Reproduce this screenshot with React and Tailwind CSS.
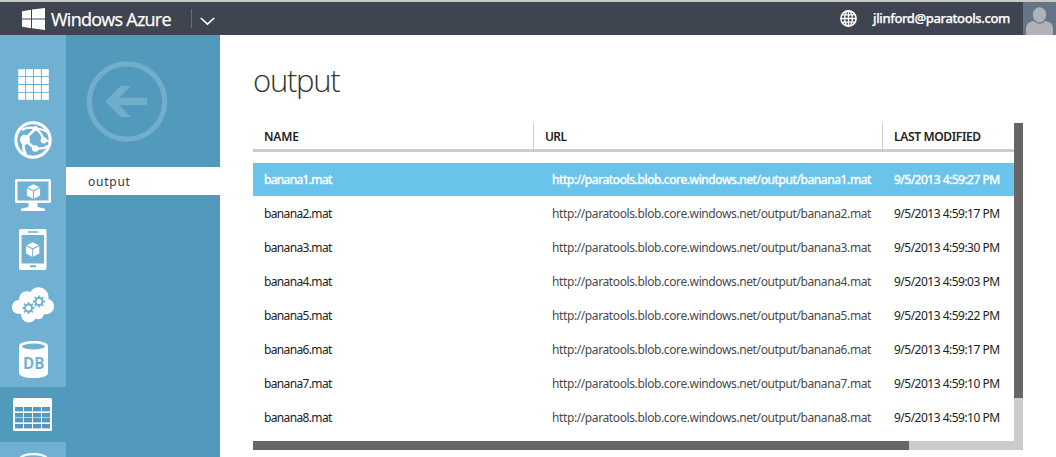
import React from "react";

const files = [
  ["banana1.mat", "9/5/2013 4:59:27 PM"],
  ["banana2.mat", "9/5/2013 4:59:17 PM"],
  ["banana3.mat", "9/5/2013 4:59:30 PM"],
  ["banana4.mat", "9/5/2013 4:59:03 PM"],
  ["banana5.mat", "9/5/2013 4:59:22 PM"],
  ["banana6.mat", "9/5/2013 4:59:17 PM"],
  ["banana7.mat", "9/5/2013 4:59:10 PM"],
  ["banana8.mat", "9/5/2013 4:59:10 PM"],
];

function WindowsLogo() {
  return (
    <svg width="23" height="22" viewBox="0 0 23 22" fill="#fff">
      <path d="M0 3.2 9 1.8V10.6H0zM10 1.6 23 0V10.6H10zM0 11.5H9V20.2L0 18.8zM10 11.5H23V22L10 20.3z" />
    </svg>
  );
}

function GlobeIcon() {
  return (
    <svg width="17" height="17" viewBox="0 0 17 17" fill="none" stroke="#fff" strokeWidth="1.3">
      <circle cx="8.5" cy="8.5" r="7.6" strokeWidth="1.6" />
      <ellipse cx="8.5" cy="8.5" rx="3.8" ry="7.6" />
      <path d="M8.5 1v15M1 8.5h15M2.2 4.8h12.6M2.2 12.2h12.6" />
    </svg>
  );
}

function AllItemsIcon() {
  const steps = [0, 1, 2, 3];
  return (
    <svg width="31" height="31" viewBox="0 0 31 31" fill="#fff">
      {steps.map((r) =>
        steps.map((c) => <rect key={`${r}-${c}`} x={c * 7.9 + 0.2} y={r * 7.9 + 0.2} width="6.9" height="6.9" />)
      )}
    </svg>
  );
}

function WebSitesIcon() {
  return (
    <svg width="38" height="38" viewBox="0 0 38 38" fill="none" stroke="#fff">
      <circle cx="19" cy="19" r="17.2" strokeWidth="3" />
      <path d="M11 18 21.500 7.500M12 20 21 27.500M10 20Q8 27 12 34" strokeWidth="2.800" />
      <path d="M21.500 7.500Q14 5 8 9M21.500 7.500Q30 8 34 12M21.500 7.500Q28 12 29.500 19M21.500 27.500Q29 28.500 34 25M29.500 19 35 20" strokeWidth="2.200" />
      <g fill="#fff" stroke="none">
        <circle cx="11" cy="18.800" r="5" />
        <circle cx="21.500" cy="7.500" r="2.500" />
        <circle cx="21.200" cy="27.500" r="3.300" />
        <circle cx="29.700" cy="19.300" r="3.100" />
      </g>
    </svg>
  );
}

function Cube() {
  return (
    <>
      <path d="M0-7.300 6-4.300 0-1.300-6-4.300z" />
      <path d="M-6.600-3.300-.5-.3V7.200L-6.600 4zM6.600-3.300.5-.3V7.200L6.600 4z" />
    </>
  );
}

function VirtualMachineIcon() {
  return (
    <svg width="36" height="34" viewBox="0 0 36 34" fill="#fff">
      <path fillRule="evenodd" d="M1.500 1h33a1.500 1.500 0 0 1 1.500 1.500v21a1.500 1.500 0 0 1-1.500 1.500h-33A1.500 1.500 0 0 1 0 23.500v-21A1.500 1.500 0 0 1 1.500 1zM2.500 3.500v19h31v-19zM13.500 25h9v4l7.500 1.700V33H6v-2.300l7.500-1.700z" />
      <g transform="translate(18.500 13.500)"><Cube /></g>
    </svg>
  );
}

function MobileIcon() {
  return (
    <svg width="28" height="41" viewBox="0 0 28 41">
      <rect width="27.500" height="41" rx="2" fill="#fff" />
      <path d="M2.500 6H25v28.500H2.500zM9 2.300h10v1.400H9zM11 36.300h6v2h-6z" fill="#70b1d3" />
      <g transform="translate(13.700 20.500)" fill="#fff"><Cube /></g>
    </svg>
  );
}

function Gear({ x, y }) {
  return (
    <g transform={`translate(${x} ${y})`} stroke="#70b1d3" fill="none">
      <circle r="3.500" strokeWidth="2" />
      <path d="M0-4V-6M0 4V6M-4 0H-6M4 0H6M-2.900-2.900-4.300-4.300M2.900 2.900 4.300 4.300M-2.900 2.900-4.300 4.300M2.900-2.900 4.300-4.300" strokeWidth="1.800" />
    </g>
  );
}

function CloudIcon() {
  return (
    <svg width="42" height="36" viewBox="0 0 42 36">
      <path fill="#fff" d="M7 13C3 13 0 16 0 20.500s4 7 9 6.500c0 4 3 8.500 7.500 8.500 3.500 0 5.500-1.500 7-4 2 1.500 7 1.500 8.500-4.500 6 1 10-3 10-7.500 0-4-2-6.500-5.500-7.500C37 6 34 1.500 28 0.500 24-.2 20.500 1.500 18.500 5 13 2.500 7 6 7 13z" />
      <Gear x={16.500} y={21} />
      <Gear x={27} y={14.500} />
    </svg>
  );
}

function DatabaseIcon() {
  return (
    <svg width="29" height="37" viewBox="0 0 29 37">
      <path fill="#fff" d="M0 5C0 2 6 0 14.500 0S29 2 29 5v27c0 3-6 5-14.500 5S0 35 0 32z" />
      <ellipse cx="14.500" cy="5.500" rx="11.500" ry="3" fill="#70b1d3" />
      <text x="4" y="27.500" fontFamily="Open Sans, sans-serif" fontWeight="700" fontSize="15.500" fill="#70b1d3" textLength="21.500" lengthAdjust="spacingAndGlyphs">DB</text>
    </svg>
  );
}

function TableIcon() {
  const rows = [9, 15, 20, 26];
  const cols = [2, 11, 20, 29];
  return (
    <svg width="39" height="33" viewBox="0 0 39 33">
      <rect width="39" height="33" rx="1.500" fill="#fff" />
      {rows.map((y) => cols.map((x) => <rect key={`${x}-${y}`} x={x} y={y} width="8" height="4.400" fill="#519abb" />))}
    </svg>
  );
}

function CylinderTopIcon() {
  return (
    <svg width="29" height="34" viewBox="0 0 29 34" fill="none" stroke="#fff" strokeWidth="2.200">
      <path d="M1.100 6C1.100 3 7 1.100 14.500 1.100S27.900 3 27.900 6v24H1.100z" />
    </svg>
  );
}

function BackIcon() {
  return (
    <svg width="82" height="82" viewBox="0 0 82 82" fill="none" stroke="#70aecb">
      <circle cx="41" cy="41.500" r="37.700" strokeWidth="5.200" />
      <path fill="#70aecb" stroke="none" d="M19.500 41.500 34.500 26H45L33 37.800H61V45H33L45 57H34.500z" />
    </svg>
  );
}

const navItems = [AllItemsIcon, WebSitesIcon, VirtualMachineIcon, MobileIcon, CloudIcon, DatabaseIcon];

export default function App() {
  return (
    <div className="flex h-[457px] w-[1056px] flex-col overflow-hidden bg-white font-['Noto_Sans','Open_Sans',sans-serif] text-[#222]">
      <header className="flex h-[35px] shrink-0 items-stretch border-t-2 border-[#c9c9c7] bg-[#3e4450] text-white">
        <div className="flex items-center pl-[22px]">
          <WindowsLogo />
          <span className="ml-[6px] w-[121px] whitespace-nowrap font-['Open_Sans'] text-[18px] leading-6 tracking-[-0.75px] [-webkit-text-stroke:0.25px_white]">Windows Azure</span>
          <span className="ml-[19px] h-[19px] w-px bg-[#686d77]" />
          <svg className="ml-[8px] mt-[5px]" width="15" height="9" viewBox="0 0 15 9" fill="none" stroke="#fff" strokeWidth="1.600"><path d="M.8 1 7.500 7.200 14.200 1" /></svg>
        </div>
        <div className="ml-auto flex items-center">
          <GlobeIcon />
          <span className="ml-[16px] w-[150px] whitespace-nowrap pt-px text-[13px] font-medium tracking-[-0.38px] [-webkit-text-stroke:0.25px_white]">jlinford@paratools.com</span>
          <svg className="self-end" width="33" height="33" viewBox="0 0 33 33">
            <rect width="33" height="33" fill="#667585" />
            <path d="M3 33V27c0-5 3-7.500 8-8h11c5 .5 8 3 8 8v6z" fill="#adb3b9" />
            <ellipse cx="16.500" cy="12.800" rx="7.300" ry="8.300" fill="#adb3b9" stroke="#667585" strokeWidth="1.300" />
          </svg>
        </div>
      </header>

      <div className="flex min-h-0 flex-1">
        <nav className="flex w-[66px] shrink-0 flex-col overflow-hidden bg-[#70b1d3] pt-[22px]">
          {navItems.map((Icon, i) => (
            <div key={i} className="flex h-[55px] shrink-0 items-center justify-center">
              <Icon />
            </div>
          ))}
          <div className="flex h-[55px] shrink-0 items-center bg-[#519abb] pl-[13px]">
            <TableIcon />
          </div>
          <div className="flex h-[55px] shrink-0 items-center justify-center">
            <CylinderTopIcon />
          </div>
        </nav>

        <aside className="flex w-[154px] shrink-0 flex-col bg-[#519abb]">
          <div className="flex h-[132px] shrink-0 pl-[20px] pt-[25px]">
            <BackIcon />
          </div>
          <div className="flex h-[28px] shrink-0 items-center bg-white pl-[22px] pt-px text-[12px] tracking-[0.75px] text-[#333840]">output</div>
        </aside>

        <main className="flex flex-1 flex-col pl-[33px] pt-[24px]">
          <h1 className="h-[64px] font-['Open_Sans'] text-[31px] font-light leading-[42px] tracking-[-1.25px] text-[#333]">output</h1>
          <div className="flex h-[318px] w-[770px]">
            <div className="flex w-[761px] flex-col">
              <div className="flex h-[29px] shrink-0 border-b-[3px] border-[#ccc] text-[12px] font-semibold leading-[27px] tracking-[-0.35px]">
                <div className="w-[280px] pl-[11px] tracking-[-0.2px]">NAME</div>
                <div className="w-[349px] border-l border-[#ccc] pl-[11px] tracking-[-0.6px]">URL</div>
                <div className="flex-1 whitespace-nowrap border-l border-[#ccc] pl-[11px]">LAST MODIFIED</div>
              </div>
              <div className="flex flex-col pt-[11px]">
                {files.map(([name, date], i) => (
                  <div
                    key={name}
                    className={
                      i === 0
                        ? "mb-px flex h-[33px] items-center whitespace-nowrap bg-[#69c3ea] text-[12px] text-white [-webkit-text-stroke:0.4px_white]"
                        : "mb-px flex h-[33px] items-center whitespace-nowrap text-[12px]"
                    }
                  >
                    <div className="w-[299px] pl-[11px] tracking-[-0.64px]">{name}</div>
                    <div className={i === 0 ? "w-[342px] tracking-[-0.39px]" : "w-[342px] tracking-[-0.39px] text-[#4a4a4a]"}>
                      http://paratools.blob.core.windows.net/output/{name}
                    </div>
                    <div className="tracking-[-0.51px]">{date}</div>
                  </div>
                ))}
              </div>
            </div>
            <div className="h-[318px] w-[9px] bg-[#ccc]">
              <div className="h-[275px] bg-[#666]" />
            </div>
          </div>
          <div className="h-[9px] w-[770px] bg-[#ccc]">
            <div className="h-[9px] w-[656px] bg-[#666]" />
          </div>
        </main>
      </div>
    </div>
  );
}
